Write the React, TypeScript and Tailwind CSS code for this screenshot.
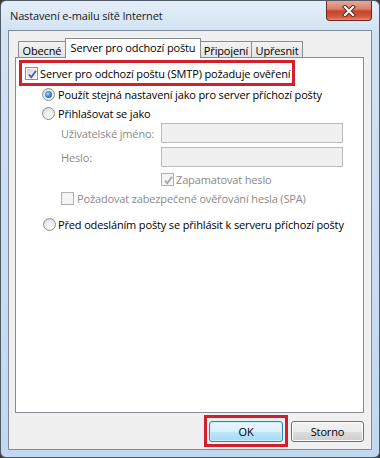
import React from "react";

const font = "font-['Open_Sans',sans-serif]";

function Checkbox({ checked = false, disabled = false }: { checked?: boolean; disabled?: boolean }) {
  return (
    <span
      className={`relative inline-flex w-[13px] h-[13px] shrink-0 border ${
        disabled ? "border-[#b1b1b1] bg-[#f4f4f4]" : "border-[#8e8f8f] bg-white"
      } p-px`}
    >
      <span
        className={`block w-full h-full ${
          disabled
            ? "bg-[#f4f4f4]"
            : "bg-[linear-gradient(135deg,#cbcfd5_0%,#e6e8ea_50%,#f6f6f6_100%)]"
        }`}
      />
      {checked && (
        <svg className="absolute left-[1px] top-[1px]" width="11" height="11" viewBox="0 0 11 11">
          <path
            d="M2 5.5 L4.3 8.2 L9 1.8"
            fill="none"
            stroke={disabled ? "#a6a6a6" : "#4a5f97"}
            strokeWidth="1.8"
          />
        </svg>
      )}
    </span>
  );
}

function Radio({ checked = false }: { checked?: boolean }) {
  return (
    <span className="relative inline-flex w-[13px] h-[13px] shrink-0 items-center justify-center rounded-full border border-[#8e8f8f] bg-[radial-gradient(circle_at_60%_65%,#ffffff_0%,#e9e9e9_55%,#c9ccd0_100%)]">
      {checked && (
        <span className="block w-[7px] h-[7px] rounded-full bg-[radial-gradient(circle_at_40%_40%,#a9dbff_0%,#3c8ad6_45%,#1b4f8f_100%)]" />
      )}
    </span>
  );
}

function Input() {
  return <span className="block w-[182px] h-[20px] border border-[#b7bbbf] bg-[#f0f0f0]" />;
}

const tabBase =
  "flex items-center justify-center border border-b-0 border-[#898c95] whitespace-nowrap";
const tabOff = `${tabBase} h-[16px] bg-[linear-gradient(180deg,#f3f3f3,#e3e3e3)] pt-[1px]`;

export default function App() {
  return (
    <div
      className={`w-[380px] h-[458px] bg-[#3a3a3a] ${font} text-[11px] tracking-[-0.15px] leading-none text-black whitespace-nowrap`}
    >
      <div className="h-full flex flex-col rounded-[6px] border border-[#505b68] bg-[linear-gradient(180deg,#e4eef9_0%,#d2e2f3_7%,#c3d8ee_100%)]">
        {/* Title bar */}
        <div className="h-[29px] flex items-start shrink-0">
          <span className="pl-[9px] pt-[9px] text-[#1a1a1a]">Nastavení e-mailu sítě Internet</span>
          <span className="ml-auto mr-[7px] w-[46px] h-[20px] flex items-center justify-center rounded-b-[4px] border border-t-0 border-[#6b2b22] bg-[linear-gradient(180deg,#e9a996_0%,#d9826c_40%,#c6432c_55%,#d65a3f_85%,#e88a6a_100%)]">
            <svg width="14" height="12" viewBox="0 0 14 12">
              <path d="M3 2 L11 10 M11 2 L3 10" stroke="#5a2117" strokeWidth="4" strokeLinecap="square" />
              <path d="M3 2 L11 10 M11 2 L3 10" stroke="#ffffff" strokeWidth="2.2" strokeLinecap="square" />
            </svg>
          </span>
        </div>

        {/* Client area */}
        <div className="mx-[7px] mb-[7px] flex-1 flex flex-col border border-[#7d8b9b] bg-[#f0f0f0] pt-[7px] pl-[6px] pb-[2px]">
          {/* Tabs */}
          <div className="flex items-end h-[19px] pl-[3px] w-[349px]">
            <span className={`${tabOff} w-[48px]`}>Obecné</span>
            <span
              className={`${tabBase} relative z-10 -mb-px -ml-px h-[20px] w-[136px] bg-white pb-[2px]`}
            >
              Server pro odchozí poštu
            </span>
            <span className={`${tabOff} -ml-px w-[52px]`}>Připojení</span>
            <span className={`${tabOff} -ml-px w-[52px]`}>Upřesnit</span>
          </div>

          {/* Panel */}
          <div className="w-[349px] h-[356px] border border-[#898c95] bg-white flex flex-col">
            <div className="mt-[2px] ml-[3px] w-[276px] h-[26px] border-[3px] border-[#d21f2b] flex items-center pl-[3px] gap-[2px]">
              <Checkbox checked />
              <span>Server pro odchozí poštu (SMTP) požaduje ověření</span>
            </div>

            <div className="h-[16px] flex items-center pl-[26px] gap-[3px]">
              <Radio checked />
              <span>Použít stejná nastavení jako pro server příchozí pošty</span>
            </div>

            <div className="mt-[3px] h-[16px] flex items-center pl-[26px] gap-[3px]">
              <Radio />
              <span>Přihlašovat se jako</span>
            </div>

            <div className="mt-[2px] h-[20px] flex items-center pl-[45px] text-[#8a8a8a]">
              <span className="w-[100px]">Uživatelské jméno:</span>
              <Input />
            </div>

            <div className="mt-[4px] h-[20px] flex items-center pl-[45px] text-[#8a8a8a]">
              <span className="w-[100px]">Heslo:</span>
              <Input />
            </div>

            <div className="mt-[4px] h-[16px] flex items-center pl-[145px] gap-[2px] text-[#8a8a8a]">
              <Checkbox checked disabled />
              <span>Zapamatovat heslo</span>
            </div>

            <div className="mt-[3px] h-[16px] flex items-center pl-[45px] gap-[3px] text-[#8a8a8a]">
              <Checkbox disabled />
              <span>Požadovat zabezpečené ověřování hesla (SPA)</span>
            </div>

            <div className="mt-[10px] h-[16px] flex items-center pl-[27px] gap-[2px]">
              <Radio />
              <span>Před odesláním pošty se přihlásit k serveru příchozí pošty</span>
            </div>
          </div>

          {/* Buttons */}
          <div className="mt-[2px] w-[349px] h-[32px] flex items-center justify-end">
            <div className="w-[84px] h-[32px] border-[3px] border-[#d21f2b] flex items-center justify-center">
              <span className="w-[74px] h-[21px] flex items-center justify-center rounded-[3px] border border-[#3c7fb1] bg-[linear-gradient(180deg,#eaf6fd_0%,#d9f0fc_50%,#bee6fd_51%,#a7d9f5_100%)] shadow-[inset_0_0_0_1px_#c9ecff]">
                OK
              </span>
            </div>
            <span className="ml-[3px] w-[73px] h-[21px] flex items-center justify-center rounded-[3px] border border-[#707070] bg-[linear-gradient(180deg,#f2f2f2_0%,#ebebeb_50%,#dddddd_51%,#cfcfcf_100%)] shadow-[inset_0_0_0_1px_#fcfcfc]">
              Storno
            </span>
          </div>
        </div>
      </div>
    </div>
  );
}
